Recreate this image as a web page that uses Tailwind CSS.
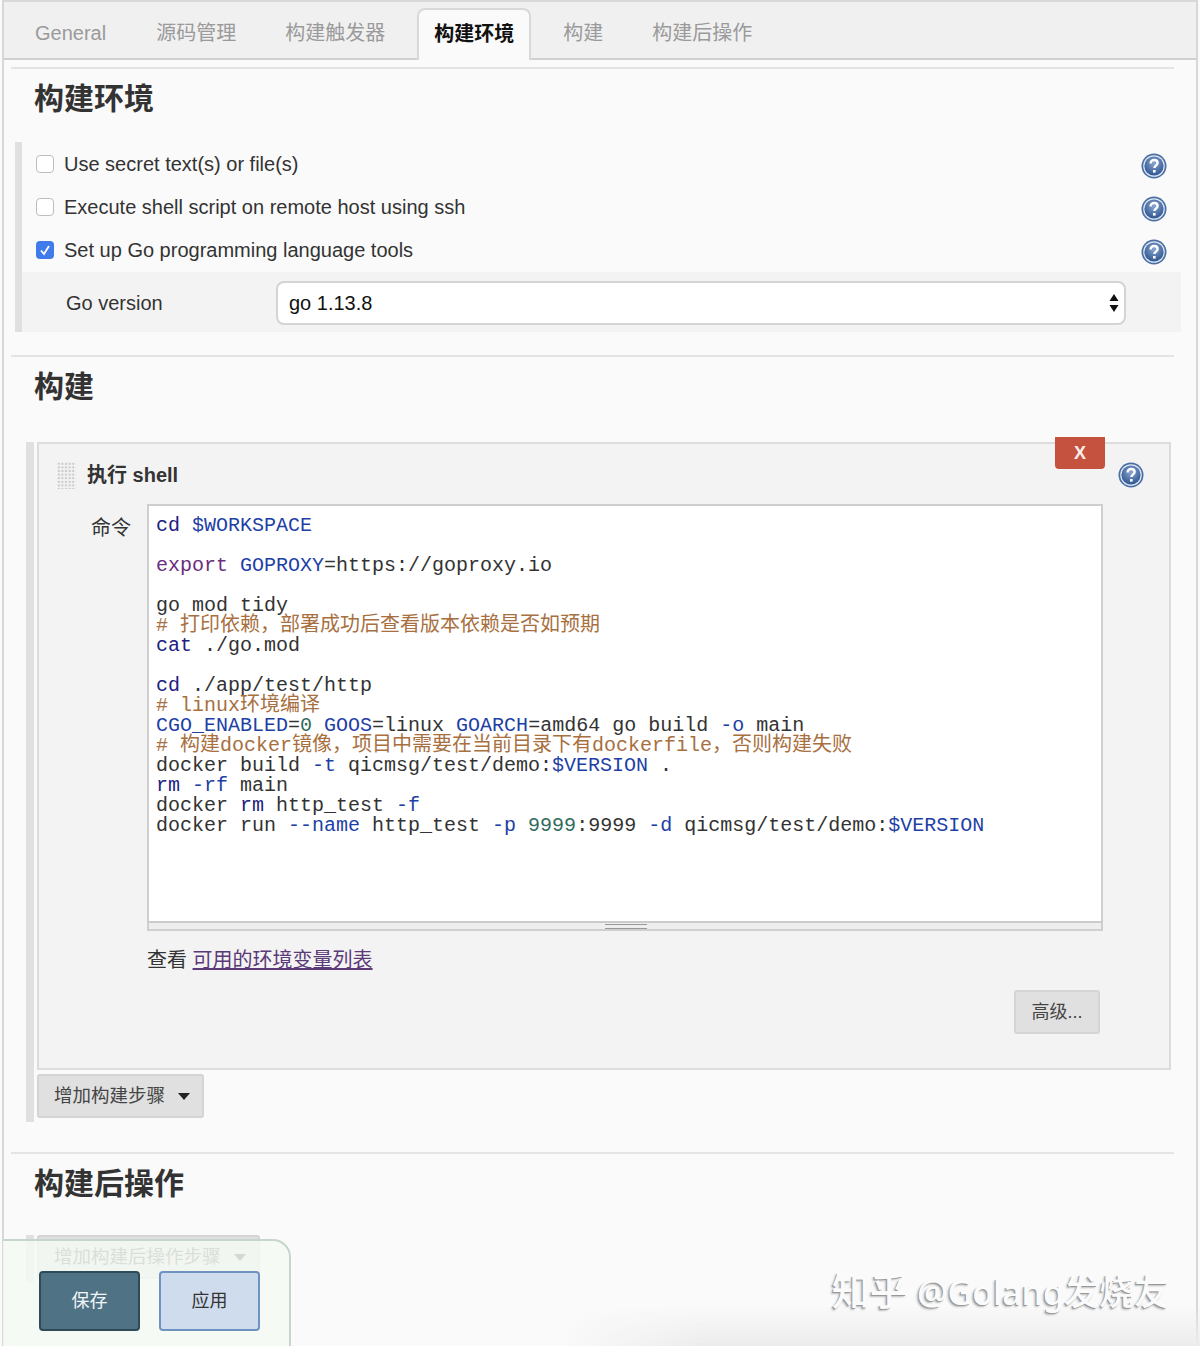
<!DOCTYPE html>
<html lang="en">
<head>
  <meta charset="UTF-8" />
  <title>构建环境</title>
  <script src="https://cdn.jsdelivr.net/npm/@tailwindcss/browser@4"></script>
</head>
<body class="bg-[#fafafa] font-['Liberation_Sans','Noto_Sans_CJK_SC',sans-serif] text-[20px] text-[#333]">
  <svg class="absolute h-0 w-0">
    <defs>
      <radialGradient id="helpBlue" cx="50%" cy="35%" r="65%">
        <stop offset="0" stop-color="#8aa6cf" />
        <stop offset="1" stop-color="#2d5590" />
      </radialGradient>
      <symbol id="help" viewBox="0 0 26 26">
        <circle cx="13" cy="13" r="12.5" fill="#4a6fa5" />
        <circle cx="13" cy="13" r="10.8" fill="#dfe7f2" />
        <circle cx="13" cy="13" r="9.6" fill="url(#helpBlue)" />
        <path d="M9.6 10.4c0-2.2 1.6-3.4 3.6-3.4s3.4 1.2 3.4 3c0 2.6-3.2 2.6-3.2 5" fill="none" stroke="#fff" stroke-width="2.4" />
        <rect x="12" y="17" width="2.6" height="2.6" fill="#fff" />
      </symbol>
    </defs>
  </svg>

  <div class="relative h-[1346px] overflow-hidden">
    <div class="mx-[2px] h-full border-x-2 border-t-2 border-[#d8d8d8]">
      <!-- tabs -->
      <div class="flex h-[58px] items-end gap-[15px] border-b-2 border-[#d0d0d0] bg-[#f0f0f0] pl-[14px] text-[#9a9a9a]">
        <div class="mr-[1px] px-[17px] h-[51px] leading-[52px]">General</div>
        <div class="px-[17px] h-[51px] leading-[52px]">源码管理</div>
        <div class="px-[17px] h-[51px] leading-[52px]">构建触发器</div>
        <div class="-mb-[2px] h-[52px] rounded-t-lg border-2 border-b-0 border-[#d8d8d8] bg-[#fafafa] px-[15px] font-bold leading-[48px] text-[#111]">构建环境</div>
        <div class="px-[17px] h-[51px] leading-[52px]">构建</div>
        <div class="px-[17px] h-[51px] leading-[52px]">构建后操作</div>
      </div>

      <div class="pl-[7px] pr-[22px]">
        <!-- 构建环境 -->
        <section class="mt-[7px] h-[288px] border-t-2 border-[#e4e4e4]">
          <h2 class="pl-[23px] pt-[10px] text-[30px] font-bold leading-[40px]">构建环境</h2>
          <div class="ml-[4px] mr-[-7px] mt-[23px] border-l-[7px] border-[#e0e0e0]">
            <div class="flex h-[43px] items-center gap-[10px] pl-[14px] pr-[14px]">
              <span class="h-[18px] w-[18px] rounded-[4px] border border-[#bdbdbd] bg-white"></span>
              <span class="flex-1">Use secret text(s) or file(s)</span>
              <svg class="mt-[4px] h-[26px] w-[26px]"><use href="#help" /></svg>
            </div>
            <div class="flex h-[43px] items-center gap-[10px] pl-[14px] pr-[14px]">
              <span class="h-[18px] w-[18px] rounded-[4px] border border-[#bdbdbd] bg-white"></span>
              <span class="flex-1">Execute shell script on remote host using ssh</span>
              <svg class="mt-[4px] h-[26px] w-[26px]"><use href="#help" /></svg>
            </div>
            <div class="flex h-[44px] items-center gap-[10px] pb-[1px] pl-[14px] pr-[14px]">
              <span class="flex h-[18px] w-[18px] items-center justify-center rounded-[4px] bg-[#3f7bea]">
                <svg viewBox="0 0 18 18" class="h-[18px] w-[18px]"><path d="M5 9.5l3 3.5 5-8" fill="none" stroke="#fff" stroke-width="1.8" /></svg>
              </span>
              <span class="flex-1">Set up Go programming language tools</span>
              <svg class="mt-[4px] h-[26px] w-[26px]"><use href="#help" /></svg>
            </div>
            <div class="flex h-[60px] items-center bg-[#f3f3f3] pl-[44px] pt-[1px]">
              <span class="w-[210px]">Go version</span>
              <div class="flex h-[44px] w-[850px] items-center justify-between rounded-lg border-2 border-[#d4d4d4] bg-white pl-[11px] pr-[5px] text-[#111]">
                go 1.13.8
                <svg viewBox="0 0 10 20" class="h-[20px] w-[10px]"><path d="M5 1l4.5 7h-9zM5 19l4.5-7h-9z" fill="#111" /></svg>
              </div>
            </div>
          </div>
        </section>

        <!-- 构建 -->
        <section class="relative h-[797px] border-t-2 border-[#e4e4e4]">
          <h2 class="pl-[23px] pt-[10px] text-[30px] font-bold leading-[40px]">构建</h2>
          <div class="ml-[15px] mr-[3px] mt-[35px] border-l-[8px] border-[#e0e0e0] pb-[4px] pl-[3px]">
            <div class="relative h-[628px] border-2 border-[#dcdcdc] bg-[#f3f3f3]">
              <div class="flex items-center gap-[11px] pl-[18px] pt-[16px]">
                <svg class="h-[27px] w-[19px]" viewBox="0 0 19 27">
                  <defs><pattern id="dots" width="3.6" height="3.6" patternUnits="userSpaceOnUse"><circle cx="1.8" cy="1.8" r="1.2" fill="#c9c9c9" /></pattern></defs>
                  <rect width="19" height="27" fill="url(#dots)" />
                </svg>
                <span class="font-bold">执行 shell</span>
              </div>
              <button class="absolute right-[64px] top-[-7px] h-[32px] w-[50px] rounded-b-[4px] bg-[#c4523f] font-['Liberation_Sans',sans-serif] text-[18px] font-bold text-[#fbeeea]">X</button>
              <svg class="absolute right-[25px] top-[18px] h-[26px] w-[26px]"><use href="#help" /></svg>

              <div class="mt-[14px] flex">
                <span class="w-[108px] shrink-0 pr-[16px] pt-[9px] text-right">命令</span>
                <div class="flex-1">
                  <div class="h-[427px] w-[956px] border-2 border-[#cfcfcf] bg-white">
<pre class="h-[415px] overflow-hidden pl-[7px] pt-[10px] font-['Liberation_Mono','Noto_Sans_CJK_SC',monospace] text-[20px] leading-[20px] text-[#333]"><span class="text-[#20207e]">cd</span> <span class="text-[#1d3fa6]">$WORKSPACE</span>

<span class="text-[#6b2d80]">export</span> <span class="text-[#1d3fa6]">GOPROXY</span>=https://goproxy.io

go mod tidy
<span class="text-[#a8703f]"># 打印依赖，部署成功后查看版本依赖是否如预期</span>
<span class="text-[#20207e]">cat</span> ./go.mod

<span class="text-[#20207e]">cd</span> ./app/test/http
<span class="text-[#a8703f]"># linux环境编译</span>
<span class="text-[#1d3fa6]">CGO_ENABLED</span>=<span class="text-[#2f6b5a]">0</span> <span class="text-[#1d3fa6]">GOOS</span>=linux <span class="text-[#1d3fa6]">GOARCH</span>=amd64 go build <span class="text-[#1d3fa6]">-o</span> main
<span class="text-[#a8703f]"># 构建docker镜像，项目中需要在当前目录下有dockerfile，否则构建失败</span>
docker build <span class="text-[#1d3fa6]">-t</span> qicmsg/test/demo:<span class="text-[#1d3fa6]">$VERSION</span> .
<span class="text-[#20207e]">rm</span> <span class="text-[#1d3fa6]">-rf</span> main
docker <span class="text-[#20207e]">rm</span> http_test <span class="text-[#1d3fa6]">-f</span>
docker run <span class="text-[#1d3fa6]">--name</span> http_test <span class="text-[#1d3fa6]">-p</span> <span class="text-[#2f6b5a]">9999</span>:9999 <span class="text-[#1d3fa6]">-d</span> qicmsg/test/demo:<span class="text-[#1d3fa6]">$VERSION</span></pre>
                    <div class="relative h-[8px] border-t-2 border-[#ccc] bg-[#eee]">
                      <div class="absolute left-[456px] top-[1px] h-[5px] w-[42px] border-y border-[#999]"></div>
                    </div>
                  </div>
                  <p class="mt-[14px]">查看 <a class="text-[#5b3a78] underline">可用的环境变量列表</a></p>
                  <div class="mt-[15px] flex w-[953px] justify-end">
                    <button class="h-[44px] w-[86px] rounded-[3px] border-2 border-[#d4d4d4] bg-[#e0e0e0] text-[18px] text-[#444]">高级...</button>
                  </div>
                </div>
              </div>
            </div>
            <button class="mt-[4px] flex h-[44px] w-[167px] items-center gap-[13px] rounded-[3px] border-2 border-[#d4d4d4] bg-[#e0e0e0] pl-[15px] text-[18.5px] text-[#444]">
              增加构建步骤
              <svg viewBox="0 0 12 7" class="h-[7px] w-[12px]"><path d="M0 0h12l-6 7z" fill="#222" /></svg>
            </button>
          </div>
        </section>

        <!-- 构建后操作 -->
        <section class="border-t-2 border-[#e4e4e4]">
          <h2 class="pl-[23px] pt-[10px] text-[30px] font-bold leading-[40px]">构建后操作</h2>
          <div class="ml-[15px] mt-[31px] h-[47px] border-l-[8px] border-[#e0e0e0] pl-[3px]">
            <button class="flex h-[44px] w-[223px] items-center gap-[13px] rounded-[3px] border-2 border-[#d4d4d4] bg-[#e0e0e0] pl-[15px] text-[18.5px] text-[#444]">
              增加构建后操作步骤
              <svg viewBox="0 0 12 7" class="h-[7px] w-[12px]"><path d="M0 0h12l-6 7z" fill="#222" /></svg>
            </button>
          </div>
        </section>
      </div>
    </div>

    <!-- bottom fade and watermark -->
    <div class="absolute bottom-0 right-0 h-[40px] w-[640px] bg-gradient-to-b from-transparent to-[#ececec] [mask-image:linear-gradient(to_right,transparent,black_140px)]"></div>
    <div class="absolute right-[31px] top-[1266px] font-['Noto_Sans','Noto_Sans_CJK_SC',sans-serif] text-[35px] font-medium leading-[48px] text-[#fbfbfb] [text-shadow:-1px_1px_0_#999,-2px_2px_2px_#bbb]"><span class="text-[38px]">知乎</span> <span class="text-[34px]">@Golang</span>发烧友</div>

    <!-- sticky save bar -->
    <div class="absolute bottom-[-2px] left-[3px] flex h-[109px] w-[288px] gap-[19px] rounded-tr-[18px] border-2 border-l-0 border-[#c6d6cc] bg-[#f4f9f2]/85 pl-[36px] pt-[30px]">
      <button class="h-[60px] w-[101px] rounded-[4px] border-2 border-[#2f4b58] bg-[#4f7385] text-[18px] text-[#f2f6f8]">保存</button>
      <button class="h-[60px] w-[101px] rounded-[4px] border-2 border-[#6f93c0] bg-[#cfdcee] text-[18px] text-[#333]">应用</button>
    </div>
  </div>
</body>
</html>
